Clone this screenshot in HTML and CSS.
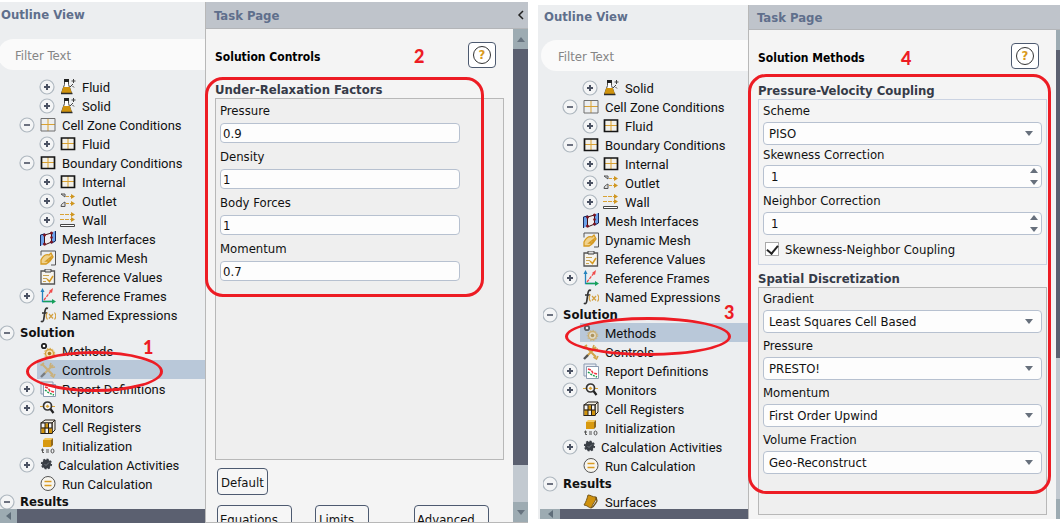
FILE: index.html
```html
<!DOCTYPE html>
<html lang="en">
<head>
<meta charset="utf-8">
<title>Solution setup</title>
<link rel="stylesheet" href="styles.css">
</head>
<body>
<svg class="defs" aria-hidden="true">
  <symbol id="flask" viewBox="0 0 16 16"><path d="M4.500 1.500h4v4l3 8.500h-10l3-8.500z" fill="#fff" stroke="#4b4b48"/><path d="M4 0h5v3H4z" fill="#222"/><path d="M3.300 8h6.500l2 6h-10.500z" fill="#d0930c"/><path d="M1 14.500h11.500" stroke="#2c2c2c" stroke-width="1.500"/><path d="M13.500 0v4M11.500 2h4M10 8l3-3M12.500 7l1.500 1.500" stroke="#444" fill="none"/></symbol>
  <symbol id="zone" viewBox="0 0 16 16"><path d="M8 1v13M1 7.500h14" stroke="#d9a233"/><path d="M1 1.500h14v12.500H1z" fill="none" stroke="#6f6f6f"/></symbol>
  <symbol id="grid" viewBox="0 0 16 16"><path d="M1.500 2h13v11.500h-13z" fill="#f3f1ea"/><path d="M8 2v12M1 7.500h14" stroke="#d9a233"/><path d="M1.500 2h13v11.500h-13z" fill="none" stroke="#151515" stroke-width="1.700"/></symbol>
  <symbol id="outlet" viewBox="0 0 16 16"><path d="M1 1h4v3L1 1zM5 9v4.500H1c0-2.500 2-3.500 4-4.500z" fill="#ddd" stroke="#555"/><path d="M6 3.500h6M6 10.500h6" stroke="#d9a233" stroke-dasharray="3 1"/><path d="M11 1l4 2.500L11 6zM11 8l4 2.500-4 2.500z" fill="#cf9620"/></symbol>
  <symbol id="wall" viewBox="0 0 16 16"><path d="M0 2.500h12M0 7.500h12" stroke="#d9a233" stroke-dasharray="4 1"/><path d="M11 0l4 2.500L11 5zM11 5l4 2.500-4 2.500z" fill="#cf9620"/><path d="M.5 12.500h14v2H.5z" fill="#fff" stroke="#444"/></symbol>
  <symbol id="mesh" viewBox="0 0 16 16"><path d="M0 4l5-2v11l-5 2zM11 2l4-2v11l-4 2z" fill="#6da1ea"/><path d="M.5 15V4l4-1M15.500 0v10l-4 2" stroke="#1b2a58" fill="none"/><path d="M4.500 4l7-2v9l-7 3z" fill="#f2ecee" stroke="#3a1013"/><g fill="#7b1320"><circle cx="4.500" cy="4" r="1.500"/><circle cx="11.500" cy="2" r="1.500"/><circle cx="4.500" cy="13" r="1.500"/><circle cx="11.500" cy="11" r="1.500"/><circle cx="11.500" cy="6.500" r="1.300"/></g></symbol>
  <symbol id="dynamic" viewBox="0 0 16 16"><path d="M1 5.500V1h14.500v14H11" fill="none" stroke="#555"/><path d="M1 10c2-4 5-6 8-5l2-2 2 4-3 4H6l5-4-2 5-3 2H1z" fill="#f0d28e" stroke="#d59a22" stroke-width="1.300"/></symbol>
  <symbol id="values" viewBox="0 0 16 16"><path d="M1 2h13.500v13H1z" fill="#f6f4ee" stroke="#555" stroke-width="1.300"/><path d="M5 0h6v3H5z" fill="#ddd" stroke="#444"/><path d="M3 6.500h6M3 9.500h4M3 12.500h3" stroke="#c9a452"/><path d="M7 10l2.500 2.500L13 7" fill="none" stroke="#d59a22" stroke-width="1.500"/></symbol>
  <symbol id="frames" viewBox="0 0 16 16"><path d="M2.500 3v10.500H13" fill="none" stroke="#2383bd" stroke-width="1.300"/><path d="M3 13.500h10" stroke="#16a05a" stroke-width="1.300"/><path d="M.5 4l2-4 2 4z" fill="#2383bd"/><path d="M12 11l4 2.500-4 2.500z" fill="#16a05a"/><path d="M4 12l7-9" stroke="#ef4b4b" stroke-width="1.300" stroke-dasharray="3 1"/><path d="M9 3l4-3-1 5z" fill="#ef4b4b"/></symbol>
  <symbol id="expr" viewBox="0 0 16 16"><path d="M8 1.500C6 .500 5.200 2 4.800 5L3.800 12c-.3 2.500-1.300 3-3 2.300M2 6h5" fill="none" stroke="#333" stroke-width="1.700"/><path d="M7.500 5.500c-1.500 2-1.500 5 0 7M14.500 5.500c1.500 2 1.500 5 0 7M9 7l4 4.500M13 7l-4 4.500" fill="none" stroke="#d3a040" stroke-width="1.200"/></symbol>
  <symbol id="methods" viewBox="0 0 16 16"><circle cx="4" cy="3" r="2.200" fill="#fff" stroke="#222" stroke-width="1.800"/><circle cx="9.500" cy="10.500" r="4" fill="#f5e4bd" stroke="#d6a23a" stroke-width="1.300"/><circle cx="9.500" cy="10.500" r="5.200" fill="none" stroke="#d6a23a" stroke-dasharray="1.500 1.500"/><circle cx="9.500" cy="10.500" r="1.800" fill="#a8781a"/></symbol>
  <symbol id="controls" viewBox="0 0 16 16"><path d="M2 2l11 11M13 3L3 13" stroke="#d2a449" stroke-width="2"/><path d="M.5 3.500L4 1M11 1l-1 3 2 1.500L15 5M10.500 13l3 2 1.500-3" stroke="#d2a449" stroke-width="1.600" fill="none"/><path d="M1 15l4-4" stroke="#555" stroke-width="2.400"/></symbol>
  <symbol id="report" viewBox="0 0 16 16"><path d="M1 1h12v12H1z" fill="#e9edf3" stroke="#8b9bb1"/><path d="M3.500 3.500h12v12h-12z" fill="#fff" stroke="#8b9bb1"/><path d="M5 6l3 1 2 3 4 1" stroke="#ef3340" stroke-width="1.500" stroke-dasharray="3 1" fill="none"/><path d="M5 9l4 3 5 2" stroke="#1f9d50" stroke-width="1.500" stroke-dasharray="2 1" fill="none"/></symbol>
  <symbol id="monitors" viewBox="0 0 16 16"><path d="M0 6.500h3M12 6.500h3" stroke="#d9a233"/><circle cx="7.500" cy="6" r="4" fill="#f5f5f5" stroke="#333" stroke-width="1.700"/><path d="M10.500 9l3 4" stroke="#222" stroke-width="2.200"/><path d="M5.500 6.500l2-2 2 2-2 1.500z" fill="#d9a233"/></symbol>
  <symbol id="registers" viewBox="0 0 16 16"><path d="M1 4l4-3h10l-3 3zM12 4l3-3v10l-3 3z" fill="#f3efe4" stroke="#27211a"/><path d="M1 4h11v10.500H1z" fill="#f4f4f4" stroke="#27211a" stroke-width="1.200"/><path d="M1.500 8.500h3.500v5.500H1.500zM5 4.500h3.500v5H5zM9 9h3v5H9z" fill="#d0930c"/><path d="M5 4v10M8.500 4v10M1 9h11" stroke="#27211a"/></symbol>
  <symbol id="init" viewBox="0 0 16 16"><path d="M3 2l2-2h8l-2 2z" fill="#f3c85e"/><path d="M11 2l2-2v7l-2 2z" fill="#91681a"/><path d="M3 2h8v7H3z" fill="#d8990f"/><path d="M2.500 10.500v4h1.500M1 12h3M6 12h3M6 14h3" stroke="#555" fill="none"/><ellipse cx="12.500" cy="13" rx="1.500" ry="2" fill="none" stroke="#555"/></symbol>
  <symbol id="calc" viewBox="0 0 16 16"><circle cx="6.500" cy="7" r="4.500" fill="#393e45"/><circle cx="6.500" cy="7" r="4.800" fill="none" stroke="#393e45" stroke-width="1.600" stroke-dasharray="2 1.700"/><path d="M4.500 7l1.500 1.500L9 5.500" fill="none" stroke="#70777f"/></symbol>
  <symbol id="run" viewBox="0 0 16 16"><circle cx="8" cy="7.500" r="7" fill="#f7f5ef" stroke="#555"/><path d="M4.500 5.500h7M4.500 9.500h7" stroke="#d99c22" stroke-width="1.700"/></symbol>
  <symbol id="surface" viewBox="0 0 16 16"><path d="M5 1c3 0 4 2 8 2 0 3-1 4-3 7-1 2-1 3-2 4-2 0-4-3-7-3 2-3 3-6 4-10z" fill="#cf910d" stroke="#7a5a1c"/><path d="M13 3l1 4c-2 3-3 6-6 7" fill="none" stroke="#6c501b" stroke-width="1.300"/></symbol>
  <symbol id="plus" viewBox="0 0 16 16"><circle cx="8" cy="8" r="7" fill="#f4f5f6" stroke="#afb8c0" stroke-width="1.200"/><path d="M5 8h6M8 5v6" stroke="#4b5263" stroke-width="2"/></symbol>
  <symbol id="minus" viewBox="0 0 16 16"><circle cx="8" cy="8" r="7" fill="#f4f5f6" stroke="#afb8c0" stroke-width="1.200"/><path d="M5 8h6" stroke="#4b5263" stroke-width="1.600"/></symbol>
</svg>
<main class="workspace">
  <section class="window controls-window">
    <aside class="outline">
      <h2 class="outline-title">Outline View</h2>
      <input class="filter" type="text" placeholder="Filter Text" aria-label="Filter Text">
      <ul class="tree">
        <li class="row deep"><button class="toggle" aria-label="Expand"><svg><use href="#plus"/></svg></button><svg class="icon"><use href="#flask"/></svg><span>Fluid</span></li>
        <li class="row deep"><button class="toggle" aria-label="Expand"><svg><use href="#plus"/></svg></button><svg class="icon"><use href="#flask"/></svg><span>Solid</span></li>
        <li class="row"><button class="toggle" aria-label="Collapse"><svg><use href="#minus"/></svg></button><svg class="icon"><use href="#zone"/></svg><span>Cell Zone Conditions</span></li>
        <li class="row deep"><button class="toggle" aria-label="Expand"><svg><use href="#plus"/></svg></button><svg class="icon"><use href="#grid"/></svg><span>Fluid</span></li>
        <li class="row"><button class="toggle" aria-label="Collapse"><svg><use href="#minus"/></svg></button><svg class="icon"><use href="#grid"/></svg><span>Boundary Conditions</span></li>
        <li class="row deep"><button class="toggle" aria-label="Expand"><svg><use href="#plus"/></svg></button><svg class="icon"><use href="#grid"/></svg><span>Internal</span></li>
        <li class="row deep"><button class="toggle" aria-label="Expand"><svg><use href="#plus"/></svg></button><svg class="icon"><use href="#outlet"/></svg><span>Outlet</span></li>
        <li class="row deep"><button class="toggle" aria-label="Expand"><svg><use href="#plus"/></svg></button><svg class="icon"><use href="#wall"/></svg><span>Wall</span></li>
        <li class="row leaf"><svg class="icon"><use href="#mesh"/></svg><span>Mesh Interfaces</span></li>
        <li class="row leaf"><svg class="icon"><use href="#dynamic"/></svg><span>Dynamic Mesh</span></li>
        <li class="row leaf"><svg class="icon"><use href="#values"/></svg><span>Reference Values</span></li>
        <li class="row"><button class="toggle" aria-label="Expand"><svg><use href="#plus"/></svg></button><svg class="icon"><use href="#frames"/></svg><span>Reference Frames</span></li>
        <li class="row leaf"><svg class="icon"><use href="#expr"/></svg><span>Named Expressions</span></li>
        <li class="row section"><button class="toggle" aria-label="Collapse"><svg><use href="#minus"/></svg></button><span>Solution</span></li>
        <li class="row leaf"><svg class="icon"><use href="#methods"/></svg><span>Methods</span></li>
        <li class="row leaf selected"><svg class="icon"><use href="#controls"/></svg><span>Controls</span></li>
        <li class="row"><button class="toggle" aria-label="Expand"><svg><use href="#plus"/></svg></button><svg class="icon"><use href="#report"/></svg><span>Report Definitions</span></li>
        <li class="row"><button class="toggle" aria-label="Expand"><svg><use href="#plus"/></svg></button><svg class="icon"><use href="#monitors"/></svg><span>Monitors</span></li>
        <li class="row leaf"><svg class="icon"><use href="#registers"/></svg><span>Cell Registers</span></li>
        <li class="row leaf"><svg class="icon"><use href="#init"/></svg><span>Initialization</span></li>
        <li class="row compact"><button class="toggle" aria-label="Expand"><svg><use href="#plus"/></svg></button><svg class="icon"><use href="#calc"/></svg><span>Calculation Activities</span></li>
        <li class="row leaf"><svg class="icon"><use href="#run"/></svg><span>Run Calculation</span></li>
        <li class="row section"><button class="toggle" aria-label="Collapse"><svg><use href="#minus"/></svg></button><span>Results</span></li>
      </ul>
      <div class="hscroll"><button class="scroll-left" aria-label="Scroll left"></button></div>
    </aside>
    <section class="task">
      <header class="task-bar"><h2>Task Page</h2><button class="collapse" aria-label="Collapse panel"><svg viewBox="0 0 8 10"><path d="M6 1L2 5l4 4" fill="none" stroke="#222" stroke-width="1.500"/></svg></button></header>
      <div class="task-content">
        <form class="page">
          <div class="page-head"><h1>Solution Controls</h1><button type="button" class="help" aria-label="Help"><span>?</span></button></div>
          <h3>Under-Relaxation Factors</h3>
          <div class="group factors">
            <div class="field"><label for="f1">Pressure</label><input id="f1" type="text" value="0.9"></div>
            <div class="field"><label for="f2">Density</label><input id="f2" type="text" value="1"></div>
            <div class="field"><label for="f3">Body Forces</label><input id="f3" type="text" value="1"></div>
            <div class="field"><label for="f4">Momentum</label><input id="f4" type="text" value="0.7"></div>
          </div>
          <div class="actions"><button type="button" class="btn">Default</button></div>
          <div class="actions more"><button type="button" class="btn wide">Equations...</button><button type="button" class="btn">Limits...</button><button type="button" class="btn wide last">Advanced...</button></div>
        </form>
        <div class="vscroll"><button class="scroll-up" aria-label="Scroll up"></button><div class="thumb"></div><button class="scroll-down" aria-label="Scroll down"></button></div>
      </div>
    </section>
    <div class="ring ring-controls"></div><span class="mark mark-1">1</span>
    <div class="frame frame-factors"></div><span class="mark mark-2">2</span>
  </section>

  <section class="window methods-window">
    <aside class="outline">
      <h2 class="outline-title">Outline View</h2>
      <input class="filter" type="text" placeholder="Filter Text" aria-label="Filter Text">
      <ul class="tree">
        <li class="row deep"><button class="toggle" aria-label="Expand"><svg><use href="#plus"/></svg></button><svg class="icon"><use href="#flask"/></svg><span>Solid</span></li>
        <li class="row"><button class="toggle" aria-label="Collapse"><svg><use href="#minus"/></svg></button><svg class="icon"><use href="#zone"/></svg><span>Cell Zone Conditions</span></li>
        <li class="row deep"><button class="toggle" aria-label="Expand"><svg><use href="#plus"/></svg></button><svg class="icon"><use href="#grid"/></svg><span>Fluid</span></li>
        <li class="row"><button class="toggle" aria-label="Collapse"><svg><use href="#minus"/></svg></button><svg class="icon"><use href="#grid"/></svg><span>Boundary Conditions</span></li>
        <li class="row deep"><button class="toggle" aria-label="Expand"><svg><use href="#plus"/></svg></button><svg class="icon"><use href="#grid"/></svg><span>Internal</span></li>
        <li class="row deep"><button class="toggle" aria-label="Expand"><svg><use href="#plus"/></svg></button><svg class="icon"><use href="#outlet"/></svg><span>Outlet</span></li>
        <li class="row deep"><button class="toggle" aria-label="Expand"><svg><use href="#plus"/></svg></button><svg class="icon"><use href="#wall"/></svg><span>Wall</span></li>
        <li class="row leaf"><svg class="icon"><use href="#mesh"/></svg><span>Mesh Interfaces</span></li>
        <li class="row leaf"><svg class="icon"><use href="#dynamic"/></svg><span>Dynamic Mesh</span></li>
        <li class="row leaf"><svg class="icon"><use href="#values"/></svg><span>Reference Values</span></li>
        <li class="row"><button class="toggle" aria-label="Expand"><svg><use href="#plus"/></svg></button><svg class="icon"><use href="#frames"/></svg><span>Reference Frames</span></li>
        <li class="row leaf"><svg class="icon"><use href="#expr"/></svg><span>Named Expressions</span></li>
        <li class="row section"><button class="toggle" aria-label="Collapse"><svg><use href="#minus"/></svg></button><span>Solution</span></li>
        <li class="row leaf selected"><svg class="icon"><use href="#methods"/></svg><span>Methods</span></li>
        <li class="row leaf"><svg class="icon"><use href="#controls"/></svg><span>Controls</span></li>
        <li class="row"><button class="toggle" aria-label="Expand"><svg><use href="#plus"/></svg></button><svg class="icon"><use href="#report"/></svg><span>Report Definitions</span></li>
        <li class="row"><button class="toggle" aria-label="Expand"><svg><use href="#plus"/></svg></button><svg class="icon"><use href="#monitors"/></svg><span>Monitors</span></li>
        <li class="row leaf"><svg class="icon"><use href="#registers"/></svg><span>Cell Registers</span></li>
        <li class="row leaf"><svg class="icon"><use href="#init"/></svg><span>Initialization</span></li>
        <li class="row compact"><button class="toggle" aria-label="Expand"><svg><use href="#plus"/></svg></button><svg class="icon"><use href="#calc"/></svg><span>Calculation Activities</span></li>
        <li class="row leaf"><svg class="icon"><use href="#run"/></svg><span>Run Calculation</span></li>
        <li class="row section"><button class="toggle" aria-label="Collapse"><svg><use href="#minus"/></svg></button><span>Results</span></li>
        <li class="row leaf"><svg class="icon"><use href="#surface"/></svg><span>Surfaces</span></li>
      </ul>
      <div class="hscroll"><button class="scroll-left" aria-label="Scroll left"></button></div>
    </aside>
    <section class="task">
      <header class="task-bar"><h2>Task Page</h2></header>
      <div class="task-content">
        <form class="page">
          <div class="page-head"><h1>Solution Methods</h1><button type="button" class="help" aria-label="Help"><span>?</span></button></div>
          <h3>Pressure-Velocity Coupling</h3>
          <div class="group coupling">
            <div class="field"><label for="m1">Scheme</label><div class="drop"><select id="m1"><option>PISO</option></select></div></div>
            <div class="field tight"><label for="m2">Skewness Correction</label><div class="spin"><input id="m2" type="number" value="1"></div></div>
            <div class="field"><label for="m3">Neighbor Correction</label><div class="spin"><input id="m3" type="number" value="1"></div></div>
            <div class="check"><input id="m4" type="checkbox" checked><label for="m4">Skewness-Neighbor Coupling</label></div>
          </div>
          <h3 class="second">Spatial Discretization</h3>
          <div class="group discretization">
            <div class="field"><label for="m5">Gradient</label><div class="drop"><select id="m5"><option>Least Squares Cell Based</option></select></div></div>
            <div class="field"><label for="m6">Pressure</label><div class="drop"><select id="m6"><option>PRESTO!</option></select></div></div>
            <div class="field"><label for="m7">Momentum</label><div class="drop"><select id="m7"><option>First Order Upwind</option></select></div></div>
            <div class="field"><label for="m8">Volume Fraction</label><div class="drop"><select id="m8"><option>Geo-Reconstruct</option></select></div></div>
          </div>
        </form>
        <div class="vscroll"><button class="scroll-up" aria-label="Scroll up"></button><div class="thumb"></div><button class="scroll-down" aria-label="Scroll down"></button></div>
      </div>
    </section>
    <div class="ring ring-methods"></div><span class="mark mark-3">3</span>
    <div class="frame frame-methods"></div><span class="mark mark-4">4</span>
  </section>
</main>
</body>
</html>
```
FILE: styles.css
```css
* { box-sizing: border-box; }
body { margin: 0; background: #fff; color: #111; font: 13px "DejaVu Sans Condensed", "DejaVu Sans", sans-serif; }
h1, h2, h3, ul { margin: 0; padding: 0; }
button, input, select { font: inherit; color: inherit; margin: 0; }
button { padding: 0; border: 0; background: none; }
.defs { display: none; }

.workspace { display: flex; gap: 10px; height: 100vh; overflow: hidden; }
.window { position: relative; display: flex; min-width: 0; }
.controls-window { flex: 528; margin: 2px 0 3px; --bar: 26px; }
.methods-window { flex: 522; margin: 5px 0 7px; --bar: 24px; }

/* Outline */
.outline { display: flex; flex-direction: column; flex: none; width: 205px; background: #eceef0; overflow: hidden; }
.methods-window .outline { width: 210px; padding-left: 5px; }
.outline-title { padding-left: 1px; line-height: var(--bar); margin-bottom: 11px; font-size: 13px; color: #5f6f8c; }
.filter { flex: none; height: 31px; margin: 0 0 7px -2px; padding: 2px 17px 0; border: 0; border-radius: 16px 0 0 16px; background: #fafafa; outline: 0; }
.filter::placeholder { color: #858585; opacity: 1; }
.tree { flex: 1; min-height: 0; overflow: hidden; list-style: none; font-family: Roboto, sans-serif; }
.row { display: flex; align-items: center; height: 19px; padding-left: 19px; white-space: nowrap; }
.row span { line-height: 17px; padding-top: 2px; }
.deep { padding-left: 39px; }
.leaf { padding-left: 40px; }
.section { height: 17px; padding-left: 0; font-family: "DejaVu Sans Condensed", sans-serif; font-weight: bold; }
.section span { padding: 0 0 0 5px; }
.toggle { display: flex; width: 16px; height: 16px; margin-right: 5px; }
.section .toggle { margin: 0 0 0 -1px; }
.toggle svg { width: 16px; height: 16px; }
.icon { flex: none; width: 16px; height: 16px; margin-right: 6px; }
.compact .icon { margin-right: 2px; }
.selected { background: linear-gradient(to right, transparent 37px, #b9c8d9 37px); }
.selected .icon { opacity: .65; }
.hscroll { flex: none; height: 14px; background: #5b6070; }
.methods-window .hscroll { height: 10px; margin-left: -3px; }
.scroll-left { display: flex; align-items: center; justify-content: center; width: 17px; height: 100%; background: #9dabb2; }
.methods-window .scroll-left { width: 20px; }
.scroll-left::before { content: ""; border: 4px solid transparent; border-right: 5px solid #5f6d79; border-left: 0; }

/* Task page */
.task { display: flex; flex-direction: column; flex: 1; min-width: 0; overflow: hidden; border-left: 1px solid #b8b8b8; background: #f4f4f4; }
.controls-window .task { border-bottom: 1px solid #b8b8b8; }
.task-bar { display: flex; justify-content: space-between; align-items: center; flex: none; height: calc(var(--bar) + 1px); padding: 0 3px 0 8px; background: #bfc4cb; border-bottom: 1px solid #b3b5b8; }
.task-bar h2 { font-size: 13px; color: #5f6f8c; }
.collapse svg { display: block; width: 8px; height: 10px; }
.task-content { display: flex; flex: 1; min-height: 0; }
.methods-window .task-content { margin-right: -11px; }
.page { flex: 1; min-width: 0; padding: 13px 9px 0; }
.page-head { display: flex; justify-content: space-between; align-items: center; height: 26px; margin-bottom: 14px; padding-right: 8px; }
.page-head h1 { padding-top: 4px; font-size: 12px; line-height: 16px; color: #000; }
.help { display: grid; place-items: center; width: 28px; height: 26px; border: 1px solid #4d5a70; border-radius: 4px; background: #fff; }
.help span { width: 18px; height: 18px; border: 1px solid #333; border-radius: 50%; color: #d99a1c; font-weight: bold; line-height: 16px; }
h3 { font-size: 13px; line-height: 16px; color: #363b48; }
.second { margin-top: 6px; }
.group { padding: 0 4px; border: 1px solid #b8b8b8; background: #efefef; }
.factors { min-height: 362px; padding-right: 43px; }
.coupling { border-color: #cbd3e2; background: #f4f4f4; }
.discretization { min-height: 228px; }
.field label { display: block; line-height: 22px; }
.field + .field { padding-top: 2px; }
.factors .field label { line-height: 24px; }
.field.tight { padding-top: 0; }
.tight label { line-height: 20px; }
.field input, .field select { display: block; width: 100%; height: 23px; border: 1px solid #b7c1d0; border-radius: 4px; background: #fdfdfd; outline: 0; }
.factors .field input { height: 20px; padding: 0 2px; }
.drop, .spin { position: relative; }
.drop select { appearance: none; padding: 0 20px 0 5px; }
.drop::after { content: ""; position: absolute; right: 9px; top: 9px; border: 4px solid transparent; border-top: 5px solid #67707c; border-bottom: 0; pointer-events: none; }
.spin input { appearance: textfield; padding: 0 20px 0 7px; }
.spin input::-webkit-inner-spin-button { appearance: none; }
.spin::before, .spin::after { content: ""; position: absolute; right: 4px; border: 4px solid transparent; pointer-events: none; }
.spin::before { top: 3px; border-top: 0; border-bottom: 5px solid #67707c; }
.spin::after { bottom: 3px; border-bottom: 0; border-top: 5px solid #67707c; }
.check { display: flex; align-items: center; gap: 6px; padding: 7px 2px 8px; height: 29px; }
.check input { appearance: none; width: 14px; height: 14px; border: 1px solid #aaa; background: #fff; display: grid; place-items: center; }
.check input:checked::before { content: ""; width: 5px; height: 9px; margin-top: -2px; border: solid #222; border-width: 0 2px 2px 0; transform: rotate(40deg); }
.actions { display: flex; padding: 8px 15px 0 2px; }
.more { gap: 23px; padding-top: 10px; }
.btn { height: 27px; padding: 2px 3px 0; border: 1px solid #4d5a70; border-radius: 4px; background: #f6f6f6; white-space: nowrap; }
.btn.wide { width: 75px; padding: 2px 0 0; }
.btn.last { margin-left: auto; }
.vscroll { display: flex; flex-direction: column; flex: none; width: 15px; background: #c2c9d0; }
.scroll-up, .scroll-down { display: grid; place-items: center; flex: none; height: 20px; background: #9dabb2; }
.scroll-up::before { content: ""; border: 4px solid transparent; border-top: 0; border-bottom: 5px solid #67737f; }
.scroll-down::before { content: ""; border: 4px solid transparent; border-bottom: 0; border-top: 5px solid #67737f; }
.thumb { flex: 416; background: #5b6070; }
.vscroll::after { content: ""; order: 1; flex: 37; }
.scroll-down { order: 2; }
.methods-window .thumb { flex: 311; }
.methods-window .vscroll::after { flex: 142; }

/* Red call-outs drawn over the windows */
.ring, .frame, .mark { position: absolute; pointer-events: none; }
.ring, .frame { border: 3px solid #ed1c24; }
.ring { border-radius: 50%; }
.frame { border-radius: 18px; }
.ring-controls { left: 26px; top: 349px; width: 137px; height: 41px; }
.ring-methods { left: 27px; top: 312px; width: 166px; height: 39px; }
.frame-factors { left: 205px; top: 75px; right: 44px; height: 220px; }
.frame-methods { left: 210px; top: 69px; right: 9px; height: 420px; }
.mark { color: #ed1c24; font: 900 18px/20px Lato, sans-serif; }
.mark-1 { left: 143px; top: 335px; }
.mark-2 { left: 414px; top: 44px; }
.mark-3 { left: 186px; top: 297px; }
.mark-4 { left: 363px; top: 43px; }
```
